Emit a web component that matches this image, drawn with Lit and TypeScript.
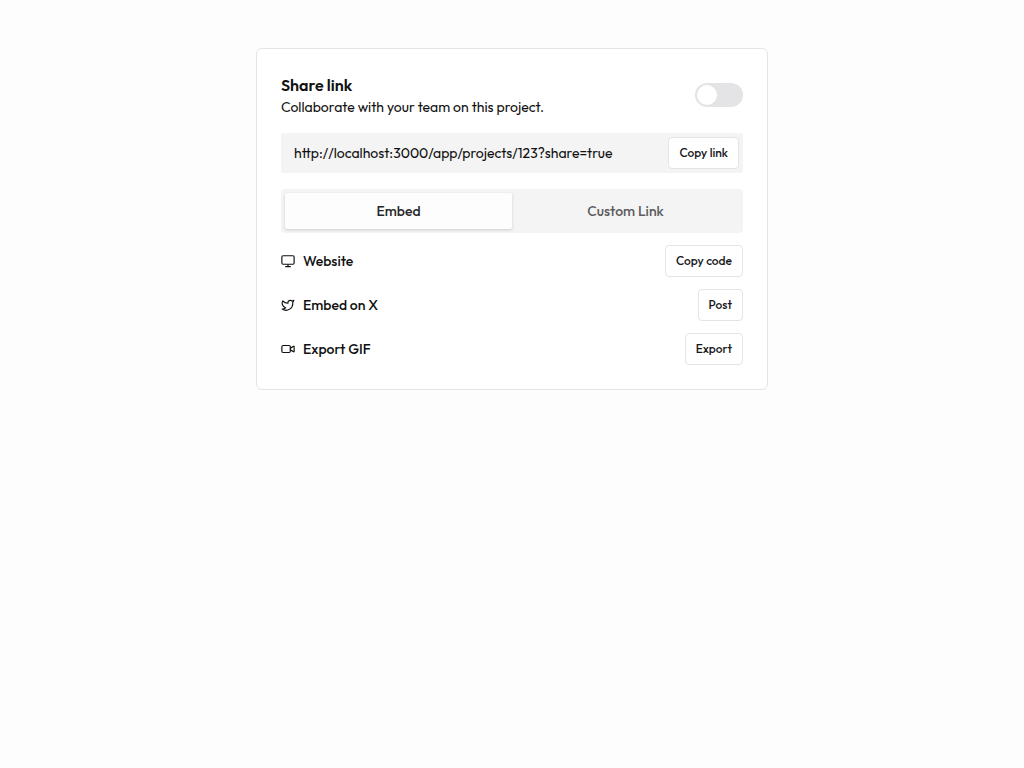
import { LitElement, html, css, svg } from "lit";
import { customElement, state } from "lit/decorators.js";

const icons = {
  monitor: svg`<rect x="1.500" y="3" width="21" height="14.500" rx="2"/><path d="M8 21.500h8M12 18v3.500"/>`,
  bird: svg`<path d="M22 4s-.7 2.100-2 3.400c1.600 10-9.400 17.300-18 11.600 2.200.1 4.400-.6 6-2C3 15.500.5 9.600 3 5c2.200 2.600 5.600 4.100 9 4-.9-4.200 4-6.600 7-3.800 1.100 0 3-1.200 3-1.200z"/>`,
  video: svg`<rect x="1.500" y="6" width="14.500" height="12" rx="2"/><path d="m16 13.500 5.700 3.300a.5.5 0 0 0 .8-.4V7.600a.5.5 0 0 0-.8-.4L16 10.500"/>`,
};

const rows = [
  { icon: icons.monitor, label: "Website", action: "Copy code" },
  { icon: icons.bird, label: "Embed on X", action: "Post" },
  { icon: icons.video, label: "Export GIF", action: "Export" },
];

@customElement("app-root")
export class AppRoot extends LitElement {
  @state() private shared = false;
  @state() private tab = "Embed";

  static styles = css`
    :host {
      display: block;
      box-sizing: border-box;
      min-height: 100vh;
      padding: 48px 24px;
      background: #fdfdfd;
      color: #111;
      font-family: Outfit, Lato, sans-serif;
      font-size: 14px;
      line-height: 20px;
    }
    * {
      box-sizing: border-box;
    }
    .card {
      max-width: 512px;
      margin: 0 auto;
      padding: 24px;
      border: 1px solid #e4e4e7;
      border-radius: 6px;
      background: #fff;
    }
    .header {
      display: flex;
      align-items: center;
      justify-content: space-between;
      gap: 16px;
    }
    h1,
    p {
      margin: 0;
    }
    h1 {
      font-size: 16px;
      line-height: 24px;
      font-weight: 600;
    }
    .switch {
      appearance: none;
      display: flex;
      flex: none;
      width: 48px;
      height: 24px;
      margin: 0;
      padding: 2px;
      border-radius: 12px;
      background: #e4e4e7;
      cursor: pointer;
    }
    .switch::before {
      content: "";
      width: 20px;
      height: 20px;
      border-radius: 50%;
      background: #fff;
    }
    .switch:checked {
      justify-content: flex-end;
      background: #18181b;
    }
    .link {
      display: flex;
      align-items: center;
      height: 40px;
      margin-top: 16px;
      padding: 0 4px 0 13px;
      border-radius: 2px;
      background: #f4f4f4;
    }
    .url {
      flex: 1;
      min-width: 0;
      padding: 0;
      border: 0;
      outline: 0;
      background: none;
      color: inherit;
      font: inherit;
    }
    button {
      font-family: inherit;
      font-weight: 500;
      cursor: pointer;
    }
    .action {
      height: 32px;
      padding: 0 10px;
      border: 1px solid #e4e4e7;
      border-radius: 4px;
      background: #fff;
      color: #18181b;
      font-size: 12px;
      line-height: 16px;
    }
    .tabs {
      display: grid;
      grid-template-columns: 1fr 1fr;
      height: 44px;
      margin: 16px 0 12px;
      padding: 4px;
      border-radius: 4px;
      background: #f4f4f4;
    }
    .tab {
      padding: 0;
      border: 0;
      border-radius: 2px;
      background: none;
      color: #5c5c60;
      font-size: 14px;
      line-height: 20px;
    }
    .tab.active {
      background: #fdfdfd;
      color: #27272a;
      box-shadow: 0 1px 3px rgb(0 0 0 / 16%);
    }
    .rows {
      display: grid;
      gap: 12px;
    }
    .row {
      display: flex;
      align-items: center;
      gap: 8px;
      font-weight: 500;
    }
    .row svg {
      width: 14px;
      height: 14px;
      fill: none;
      stroke: currentColor;
      stroke-width: 2;
      stroke-linecap: round;
      stroke-linejoin: round;
    }
    .label {
      flex: 1;
    }
  `;

  render() {
    return html`
      <main class="card">
        <div class="header">
          <div>
            <h1 id="title">Share link</h1>
            <p>Collaborate with your team on this project.</p>
          </div>
          <input class="switch" type="checkbox" role="switch" aria-labelledby="title"
            .checked=${this.shared} @change=${() => (this.shared = !this.shared)} />
        </div>
        <div class="link">
          <input class="url" type="text" readonly aria-label="Share link"
            value="http://localhost:3000/app/projects/123?share=true" />
          <button class="action">Copy link</button>
        </div>
        <div class="tabs" role="tablist">
          ${["Embed", "Custom Link"].map(
            (t) => html`<button role="tab" class="tab ${t === this.tab ? "active" : ""}"
              aria-selected=${t === this.tab} @click=${() => (this.tab = t)}>${t}</button>`
          )}
        </div>
        <div class="rows">
          ${rows.map(
            (r) => html`<div class="row">
              <svg viewBox="0 0 24 24" aria-hidden="true">${r.icon}</svg>
              <span class="label">${r.label}</span>
              <button class="action">${r.action}</button>
            </div>`
          )}
        </div>
      </main>
    `;
  }
}
